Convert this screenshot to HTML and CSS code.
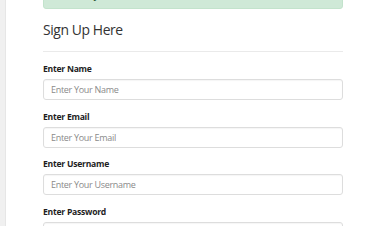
FILE: index.html
```html
<!doctype html>
<html lang="en">
	<head>
		<meta charset="utf-8">
		<meta name="viewport" content="width=device-width, initial-scale=1.0"/>
		<title>Sign Up</title>
		<link rel="stylesheet" href="styles.css">
	</head>
	<body>
		<div class="sidebar"></div>

		<main class="page">
			<div class="wrap">
				<div class="alert">Thank you!</div>

				<h3 class="title">Sign Up Here</h3>
				<hr>

				<form class="signup">
					<div class="group">
						<label for="name">Enter Name</label>
						<input type="text" id="name" placeholder="Enter Your Name">
					</div>
					<div class="group">
						<label for="email">Enter Email</label>
						<input type="email" id="email" placeholder="Enter Your Email">
					</div>
					<div class="group">
						<label for="username">Enter Username</label>
						<input type="text" id="username" placeholder="Enter Your Username">
					</div>
					<div class="group">
						<label for="password">Enter Password</label>
						<input type="password" id="password" placeholder="Enter Your Password">
					</div>
				</form>
			</div>
		</main>
	</body>
</html>
```

FILE: styles.css
```css
/*----- Reset -----*/

*{
	box-sizing: border-box;
}

html, body{
	height: 100%;
	padding: 0;
	margin: 0;
	-webkit-font-smoothing: antialiased;
	font-family: "Open Sans", "Noto Sans", sans-serif;
	font-size: 9px;
	color: #333;
	background: #fff;
}

body{
	display: flex;
	overflow: hidden;
}

/*----- Layout -----*/

.sidebar{
	flex: 0 0 6px;
	background: #f0f0f0;
	border-right: 1px solid #e6e6e6;
}

.page{
	flex: 1;
	padding-left: 37px;
}

.wrap{
	width: 300px;
}

/*----- Alert -----*/

.alert{
	margin-top: -19px;
	padding: 7px 10px 6px 19px;
	line-height: 13px;
	font-weight: bold;
	color: #2f5d3a;
	background: #cfe9d7;
	border: 1px solid #c3e3cc;
	border-radius: 0 0 3px 3px;
}

/*----- Heading -----*/

.title{
	margin: 12px 0 0;
	font-size: 13.9px;
	line-height: 17px;
	letter-spacing: -0.4px;
	font-weight: normal;
	color: #333;
}

hr{
	margin: 13px 0 11px;
	border: 0;
	border-top: 1px solid #eaeaea;
}

/*----- Form -----*/

.group{
	margin-bottom: 10.7px;
}

.group label{
	display: block;
	margin-bottom: 3px;
	line-height: 13px;
	font-size: 8.6px;
	letter-spacing: -0.25px;
	font-weight: bold;
	color: #1e1e1e;
}

.group input{
	display: block;
	width: 100%;
	height: 21px;
	padding: 0 7px;
	font-family: inherit;
	font-size: 9px;
	letter-spacing: -0.3px;
	color: #555;
	border: 1px solid #ddd;
	border-radius: 3px;
	box-shadow: inset 0 1px 1px rgba(0,0,0,0.04);
}

.group input::placeholder{
	color: #8a8a8a;
}
```
